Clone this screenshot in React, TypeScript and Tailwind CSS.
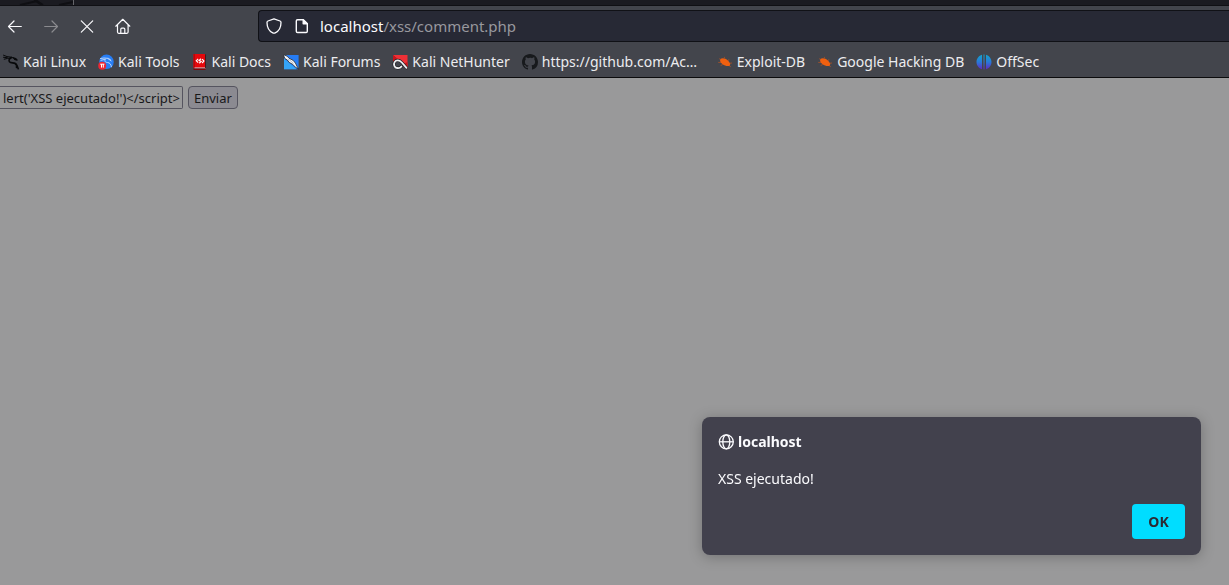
import type { ReactNode } from "react";

function KaliDragon() {
  return (
    <svg viewBox="0 0 16 16" className="size-4 shrink-0" fill="none" stroke="#08090b" strokeLinecap="round" strokeLinejoin="round" aria-hidden="true">
      <path d="M.5 1.2 4 2.6 8.500 3.2 11 4.4M.5 3.3l3.800.4M1.2 5.2 4.6 4.4 8 4" strokeWidth="1" />
      <path d="M8.5 3.5C6.5 4.6 5.4 6 6.5 7.7c1 1.3 3.4 1 5.5 1.7 1.9.7 2.4 2.6 3.2 5.3" strokeWidth="1.6" />
      <path d="M10.500 3.800l2 .8 1.500 1.400-2.400-.6M11.800 9.200c1.500.6 2.200 2 1.600 4.300" strokeWidth="1.4" />
    </svg>
  );
}

function KaliTools() {
  return (
    <svg viewBox="0 0 16 16" className="size-4 shrink-0" fill="none" aria-hidden="true">
      <circle cx="8.5" cy="7.8" r="7.3" fill="#267df5" />
      <path d="M2.5 4.5 6 4l4.500.4 2 1.400M3 6.300l4-1M7.500 5.200C6 7 7.200 8.300 9.400 8.500c2.500.2 3.700 1.800 4 4.300M10 4.700l3.200 2.200" stroke="#b9d6ff" strokeWidth="1" strokeLinecap="round" />
      <circle cx="4.2" cy="11.7" r="4" fill="#ed2733" />
      <path d="M2.200 10.200h4.200M3.500 10.200v3.400M5.300 10.200v3.400" stroke="#fff" strokeWidth="1" />
    </svg>
  );
}

function KaliDocs() {
  return (
    <svg viewBox="0 0 16 16" className="size-4 shrink-0" fill="none" aria-hidden="true">
      <path d="M1.500 0h11.500v14H1.500z" fill="#e5080c" />
      <path d="M1.500 0h1.500v14H1.500z" fill="#b9060a" />
      <path d="M2.500 13.500h11v1h-11z" fill="#d9e0e6" />
      <path d="M1.500 14.500h12V16h-12z" fill="#7f0609" />
      <path d="M13 .5h.9v13.500H13z" fill="#45171b" />
      <path d="M6.200 4.800 4.300 6.700l1.900 1.900M10.100 5.200l1.800 1.900-1.800 1.900M9 4.800 7.100 6.500l2 1-1.800 1.700" stroke="#fff" strokeWidth="1.200" />
    </svg>
  );
}

function KaliForums() {
  return (
    <svg viewBox="0 0 16 16" className="size-4 shrink-0" fill="none" aria-hidden="true">
      <path d="M1 1h14.600v14.200H1z" fill="#267cf4" />
      <path d="M1 4.500 13.500 15.200H1z" fill="#35a4f7" />
      <path d="M.2.6 4 2.100l2.100 2.200 4 2 2.300 2.800 1.500 3 1.800 3-3.300-1.900-2.600-2.800-3.600-2L4.400 6 2 4.700z" fill="#f5f7fa" stroke="#24272c" strokeWidth=".8" />
      <path d="m5 5 3.100 2.100 2.200 2.500" stroke="#a2a8b0" strokeWidth=".7" />
    </svg>
  );
}

function NetHunter() {
  return (
    <svg viewBox="0 0 16 16" className="size-4 shrink-0" fill="none" strokeLinecap="round" aria-hidden="true">
      <path d="M1 1h14.500v14z" fill="#ef3036" />
      <path d="M1 1v7l6-2zM10 11l5.500 4V8z" fill="#c9141b" />
      <path d="M14.500 13.800 9.800 8.500C7.500 5.800 4.200 5.600 2.700 7.900c-1.600 2.600-.2 5.700 2.500 6.100 1.900.3 3.400-.4 4.200-1.600" stroke="#202126" strokeWidth="3" />
      <path d="M14.500 13.800 9.800 8.500C7.500 5.800 4.200 5.600 2.700 7.900c-1.600 2.600-.2 5.700 2.500 6.100 1.900.3 3.400-.4 4.200-1.600" stroke="#eeeef0" strokeWidth="1.800" />
    </svg>
  );
}

function GitHub() {
  return (
    <svg viewBox="0 0 16 16" className="size-4 shrink-0" fill="#17191c" aria-hidden="true">
      <path d="M8 0C3.58 0 0 3.58 0 8c0 3.54 2.29 6.53 5.47 7.59.4.07.55-.17.55-.38 0-.19-.01-.82-.01-1.49-2.01.37-2.53-.49-2.69-.94-.09-.23-.48-.94-.82-1.13-.28-.15-.68-.52-.01-.53.63-.01 1.08.58 1.23.82.72 1.21 1.87.87 2.33.66.07-.52.28-.87.51-1.07-1.78-.2-3.64-.89-3.64-3.95 0-.87.31-1.59.82-2.15-.08-.2-.36-1.02.08-2.12 0 0 .67-.21 2.2.82A7.66 7.66 0 0 1 8 3.86c.68 0 1.36.09 2 .27 1.53-1.04 2.2-.82 2.2-.82.44 1.1.16 1.92.08 2.12.51.56.82 1.27.82 2.15 0 3.07-1.87 3.75-3.65 3.95.29.25.54.73.54 1.48 0 1.07-.01 1.93-.01 2.2 0 .21.15.46.55.38A8.01 8.01 0 0 0 16 8c0-4.42-3.58-8-8-8z" />
    </svg>
  );
}

function ExploitBug() {
  return (
    <svg viewBox="0 0 16 16" className="size-4 shrink-0" fill="none" aria-hidden="true">
      <path d="M3.300 4.900C5.500 3.500 8.500 4.300 11 6.600l2.300 2.800-.4 2.400c-2.900.5-5.300-.1-7.300-1.600C3.500 8.700 2.600 6.900 3.300 4.900z" fill="#f0600f" />
      <path d="M3.600 5.500 2.200 4.700M7 4.700l.6-1.800M10.500 6.500l1.700-.8M4 8.500l-2.800-.1M5.800 10.500l-2.100 1M12.800 9.200l2.300-.2M12 11.500l1.800 1.300" stroke="#bd541f" strokeWidth=".7" />
    </svg>
  );
}

function OffSec() {
  return (
    <svg viewBox="0 0 16 16" className="size-4 shrink-0" aria-hidden="true">
      <defs>
        <linearGradient id="offsec" gradientUnits="userSpaceOnUse" x1="0" y1="0" x2="0" y2="16">
          <stop stopColor="#10a9cb" />
          <stop offset=".5" stopColor="#2979d8" />
          <stop offset="1" stopColor="#6421c4" />
        </linearGradient>
      </defs>
      <path d="M6 .8v14.400C2.800 14.200.5 11.400.5 8S2.800 1.800 6 .8zM7.500.5h1v15h-1zM10 .8c3.200 1 5.500 3.800 5.500 7.200s-2.300 6.200-5.500 7.200z" fill="url(#offsec)" />
    </svg>
  );
}

const bookmarks: { label: string; href: string; icon: ReactNode; wide?: boolean }[] = [
  { label: "Kali Linux", href: "#kali-linux", icon: <KaliDragon /> },
  { label: "Kali Tools", href: "#kali-tools", icon: <KaliTools /> },
  { label: "Kali Docs", href: "#kali-docs", icon: <KaliDocs /> },
  { label: "Kali Forums", href: "#kali-forums", icon: <KaliForums /> },
  { label: "Kali NetHunter", href: "#kali-nethunter", icon: <NetHunter /> },
  { label: "https://github.com/Ac…", href: "#github", icon: <GitHub />, wide: true },
  { label: "Exploit-DB", href: "#exploit-db", icon: <ExploitBug /> },
  { label: "Google Hacking DB", href: "#google-hacking-db", icon: <ExploitBug /> },
  { label: "OffSec", href: "#offsec", icon: <OffSec /> },
];

function NavButton({ label, disabled, children }: { label: string; disabled?: boolean; children: ReactNode }) {
  return (
    <button type="button" aria-label={label} disabled={disabled} className="flex size-8 items-center justify-center rounded text-[#fbfbfe] disabled:text-[#8b8b8f]">
      <svg viewBox="0 0 16 16" className="size-4" fill="none" stroke="currentColor" strokeWidth="1.2" strokeLinecap="round" strokeLinejoin="round" aria-hidden="true">
        {children}
      </svg>
    </button>
  );
}

export default function App() {
  return (
    <div className="flex min-h-screen flex-col overflow-x-hidden bg-[#99999a] font-['Noto_Sans',sans-serif]">
      <header className="border-b border-[#0c0c0d] bg-[#43454c] text-[#fbfbfe]">
        <div className="flex h-1.5 border-b border-[#101014] bg-[#1b1b21]">
          <svg viewBox="0 0 73 5" className="h-full w-[73px]" fill="none" stroke="#0f0f13" strokeWidth="2" aria-hidden="true">
            <path d="M20 5 37 1l6 4M34 0l8 5M59 5l14-3" />
          </svg>
          <div className="w-px bg-[#66666b]" />
        </div>
        <div className="flex h-10 items-center">
          <nav aria-label="Navigation" className="flex w-[258px] shrink-0">
            <div className="-ml-px flex gap-1">
              <NavButton label="Back"><path d="M14.300 8.500H1.500M7 3 1.500 8.500 7 14" /></NavButton>
              <NavButton label="Forward" disabled><path d="M1.700 8.500h12.800M9 3l5.500 5.500L9 14" /></NavButton>
              <NavButton label="Stop"><path d="m2.300 2.800 11.400 11.400M13.700 2.800 2.300 14.200" /></NavButton>
              <NavButton label="Home">
                <path d="M.8 8.200 7.800 1.300l7 6.900M2.500 7v7.100c0 .7.5 1.200 1.200 1.200h8.200c.7 0 1.200-.5 1.200-1.200V7M5.800 15.200v-4c0-.7.4-1.100 1-1.100h2c.6 0 1 .4 1 1.100v4" />
              </NavButton>
            </div>
          </nav>
          <div className="flex h-8 grow items-center rounded-l border border-r-0 border-[#101116] bg-[#272935] pl-[7px]">
            <svg viewBox="0 0 16 16" className="size-4" fill="none" stroke="currentColor" strokeWidth="1.3" strokeLinejoin="round" aria-hidden="true">
              <path d="M8 .8 14 3c.7.3 1 .7 1 1.400 0 4.700-2 8.500-5.800 10.500-.8.4-1.600.4-2.400 0C3 12.900 1 9.100 1 4.400 1 3.700 1.300 3.300 2 3z" />
            </svg>
            <svg viewBox="0 0 16 16" className="ml-3 size-4" fill="none" stroke="currentColor" strokeWidth="1.4" strokeLinejoin="round" aria-hidden="true">
              <path d="M3.500 1.700h5.700l4.100 4.100v7.500c0 .7-.5 1.200-1.200 1.200H3.500c-.7 0-1.200-.5-1.200-1.200V2.900c0-.7.5-1.200 1.200-1.200z" />
              <path d="M9.200 1.700v4.100h4.100z" fill="currentColor" />
            </svg>
            <a href="#comment" className="ml-2.5 text-[15px] leading-5 text-[#98989e]">
              <span className="text-[#fbfbfe]">localhost</span>/xss/comment.php
            </a>
          </div>
        </div>
        <nav aria-label="Bookmarks" className="flex h-[31px] items-center gap-3 pl-[3px]">
          {bookmarks.map((b) => (
            <a key={b.label} href={b.href} className={b.wide ? "flex w-[183px] shrink-0 items-center gap-1" : "flex shrink-0 items-center gap-1"}>
              {b.icon}
              <span className="text-sm leading-5 whitespace-nowrap text-[#ececef]">{b.label}</span>
            </a>
          ))}
        </nav>
      </header>

      <main className="pt-2">
        <form className="flex gap-[5px]" onSubmit={(e) => e.preventDefault()}>
          <input
            type="text"
            aria-label="Comentario"
            defaultValue="lert('XSS ejecutado!')</script>"
            className="h-[23px] w-[183px] rounded-r-xs border border-l-0 border-[#55545f] bg-[#99999a] pl-[3px] text-[13px] text-[#18181a]"
          />
          <button type="submit" className="h-[23px] rounded border border-[#55545f] bg-[#8b8a91] px-[5px] text-[13px] leading-5 text-[#18181a]">
            Enviar
          </button>
        </form>
      </main>

      <div
        role="dialog"
        aria-labelledby="dialog-origin"
        aria-describedby="dialog-message"
        className="fixed right-7 bottom-[30px] flex w-[499px] max-w-[90vw] flex-col rounded-lg bg-[#42414d] p-4 text-[#fbfbfe] shadow-[0_2px_14px_rgba(0,0,0,0.25)]"
      >
        <h1 id="dialog-origin" className="flex h-[18px] items-center gap-1 text-sm leading-5 font-bold">
          <svg viewBox="0 0 16 16" className="size-4" fill="none" stroke="currentColor" strokeWidth="1.3" aria-hidden="true">
            <circle cx="8.300" cy="7.800" r="7" />
            <ellipse cx="8.300" cy="7.800" rx="3.500" ry="7" />
            <path d="M1.300 7.800h14" />
          </svg>
          localhost
        </h1>
        <p id="dialog-message" className="mt-[18px] text-sm leading-5">XSS ejecutado!</p>
        <button type="button" className="mt-[15px] h-[35px] w-[53px] self-end rounded bg-[#00ddff] text-sm font-bold text-[#2b2a33]">
          OK
        </button>
      </div>
    </div>
  );
}
